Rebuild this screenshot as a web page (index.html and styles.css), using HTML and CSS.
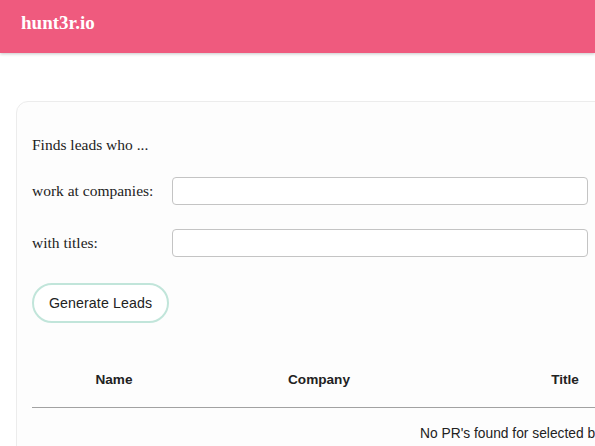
FILE: index.html
```html
<!DOCTYPE html>
<html>
<head>
<meta charset="utf-8">
<title>hunt3r.io</title>
<link rel="stylesheet" href="styles.css">
</head>
<body>
<header class="topbar">
  <h3 class="brand">hunt3r.io</h3>
</header>
<main class="content">
  <section class="card">
    <p class="intro">Finds leads who ...</p>
    <div class="field">
      <label class="field-label" for="companies">work at companies:</label>
      <input class="field-input" id="companies" type="text">
    </div>
    <div class="field">
      <label class="field-label" for="titles">with titles:</label>
      <input class="field-input" id="titles" type="text">
    </div>
    <button class="generate" type="button">Generate Leads</button>
    <table class="leads">
      <thead>
        <tr>
          <th class="col-name">Name</th>
          <th class="col-company">Company</th>
          <th class="col-title">Title</th>
          <th class="col-extra">Email</th>
        </tr>
      </thead>
      <tbody>
        <tr>
          <td class="empty" colspan="4">No PR's found for selected brands and titles</td>
        </tr>
      </tbody>
    </table>
  </section>
</main>
</body>
</html>
```

FILE: styles.css
```css
html {
  overflow: hidden;
}
body {
  margin: 0;
  background: #ffffff;
  font-family: "Liberation Serif", "Times New Roman", serif;
  color: #222;
}
.topbar {
  height: 53px;
  background: #ef5a7e;
  box-shadow: 0 1px 3px rgba(0, 0, 0, 0.22);
  display: flex;
  align-items: center;
  padding-left: 21px;
}
.brand {
  margin: 0;
  color: #ffffff;
  font-size: 19px;
  font-weight: bold;
  line-height: 22px;
  position: relative;
  top: -4px;
}
.content {
  padding: 48px 0 0 16px;
}
.card {
  width: 1000px;
  background: #fdfdfd;
  border: 1px solid #ececec;
  border-radius: 12px;
  padding: 18px 15px 40px;
  box-sizing: border-box;
}
.intro {
  margin: 16px 0 0;
  font-size: 15.5px;
  line-height: 18px;
  color: #222;
}
.field {
  display: flex;
  align-items: center;
  height: 28px;
  margin-top: 23px;
}
.field + .field {
  margin-top: 24px;
}
.field-label {
  width: 140px;
  font-size: 15.5px;
  color: #222;
}
.field-input {
  box-sizing: border-box;
  width: 416px;
  height: 28px;
  border: 1px solid #c4c4c4;
  border-radius: 4px;
  background: #fff;
  margin: 0;
}
.generate {
  display: block;
  margin-top: 26px;
  box-sizing: border-box;
  width: 137px;
  height: 40px;
  border: 2.5px solid #c1e5da;
  border-radius: 20px;
  background: #fff;
  font-family: "Liberation Sans", Arial, sans-serif;
  font-size: 14.2px;
  color: #222;
  letter-spacing: 0.1px;
  padding: 0;
}
.leads {
  margin-top: 30px;
  border-collapse: collapse;
  table-layout: fixed;
  width: 902px;
  font-family: "Liberation Sans", Arial, sans-serif;
}
.leads th {
  font-size: 13.6px;
  font-weight: bold;
  color: #222;
  line-height: 18px;
  padding: 18px 0;
  border-bottom: 1.5px solid #a2a2a2;
  text-align: center;
}
.col-name { width: 164px; }
.col-company { width: 246px; }
.col-title { width: 246px; }
.col-extra { width: 246px; }
.empty {
  font-size: 13.8px;
  line-height: 18px;
  color: #222;
  padding: 17px 0 0 388px;
  text-align: left;
}
```
